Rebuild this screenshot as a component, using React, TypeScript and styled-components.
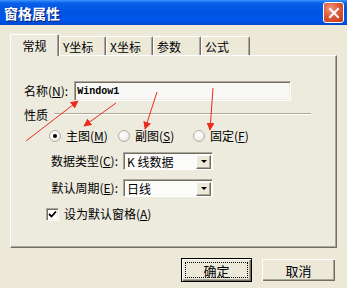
import React from "react";
import styled, { createGlobalStyle } from "styled-components";

const Global = createGlobalStyle`
  html, body { margin: 0; padding: 0; background: #ECE9D8; }
  body { font-family: "Noto Sans CJK SC", "Noto Sans", sans-serif; font-size: 12px; color: #000; }
`;

const Dialog = styled.div`
  position: relative;
  width: 347px;
  height: 288px;
  background: #ECE9D8;
  display: flex;
  flex-direction: column;
  overflow: hidden;
`;

const TitleBar = styled.div`
  height: 25px;
  flex: none;
  display: flex;
  align-items: center;
  justify-content: space-between;
  padding: 0 3px 0 4px;
  background: linear-gradient(to bottom, #3d95ff 0%, #0a5fe8 12%, #0054e3 45%, #0056ec 80%, #0048d0 100%);
`;

const Title = styled.span`
  color: #fff;
  font-weight: 700;
  font-size: 14px;
  letter-spacing: 0px;
  text-shadow: 1px 1px 0 #0a1e6e;
`;

const CloseBtn = styled.div`
  width: 21px;
  height: 21px;
  box-sizing: border-box;
  border: 1px solid #fff;
  border-radius: 3px;
  background: radial-gradient(circle at 35% 30%, #f29a7e 0%, #e0583a 45%, #c13a1c 100%);
  display: flex;
  align-items: center;
  justify-content: center;
`;

const Body = styled.div`
  flex: 1;
  display: flex;
  flex-direction: column;
  padding: 9px 10px 0 10px;
`;

const TabStrip = styled.div`
  display: flex;
  align-items: flex-end;
  height: 21px;
  flex: none;
  position: relative;
  z-index: 1;
`;

const Tab = styled.div<{ $active?: boolean; $w: number }>`
  box-sizing: border-box;
  width: ${(p) => p.$w}px;
  height: ${(p) => (p.$active ? 22 : 19)}px;
  margin-bottom: ${(p) => (p.$active ? -1 : 0)}px;
  background: ${(p) => (p.$active ? "#EDEADE" : "#ECE9D8")};
  border-top: 1px solid #fff;
  border-left: 1px solid #fff;
  border-right: 1px solid #716F64;
  box-shadow: inset -1px 0 0 #ACA899;
  border-radius: 2px 2px 0 0;
  display: flex;
  align-items: center;
  justify-content: ${(p) => (p.$active ? "center" : "flex-start")};
  padding-left: ${(p) => (p.$active ? 0 : 3)}px;
  font-size: 12px;
  line-height: 1;
  padding-top: ${(p) => (p.$active ? 0 : 1)}px;
`;

const Panel = styled.div`
  box-sizing: border-box;
  width: 327px;
  height: 193px;
  flex: none;
  background: #EDEADE;
  border-top: 1px solid #fff;
  border-left: 1px solid #fff;
  border-right: 1px solid #716F64;
  border-bottom: 1px solid #716F64;
  box-shadow: inset -1px -1px 0 #ACA899;
  padding: 25px 0 0 13px;
  display: flex;
  flex-direction: column;
`;

const NameRow = styled.div`
  display: flex;
  align-items: center;
  height: 20px;
  gap: 3px;
`;

const Label = styled.span`
  white-space: nowrap;
  line-height: 1;
`;

const Key = styled.span`
  text-decoration: underline;
`;

const TextInput = styled.div`
  box-sizing: border-box;
  width: 217px;
  height: 20px;
  margin-left: 3px;
  background: #f8f8f6;
  border-top: 1px solid #ACA899;
  border-left: 1px solid #ACA899;
  border-right: 1px solid #fff;
  border-bottom: 1px solid #fff;
  box-shadow: inset 1px 1px 0 #716F64, inset -1px -1px 0 #F1EFE2;
  font-family: "Liberation Mono", "DejaVu Sans Mono", monospace;
  font-size: 10px;
  font-weight: 700;
  display: flex;
  align-items: center;
  padding-left: 2px;
`;

const GroupHead = styled.div`
  display: flex;
  align-items: center;
  height: 14px;
  margin-top: 7px;
  gap: 6px;
`;

const GroupLine = styled.div`
  width: 257px;
  height: 0;
  border-top: 1px solid #ACA899;
  border-bottom: 1px solid #fff;
  margin-top: -3px;
`;

const RadioRow = styled.div`
  display: flex;
  align-items: center;
  height: 14px;
  margin-top: 7px;
  padding-left: 25px;
`;

const RadioItem = styled.label<{ $w: number }>`
  display: flex;
  align-items: center;
  gap: 5px;
  width: ${(p) => p.$w}px;
  white-space: nowrap;
`;

const RadioDot = styled.span<{ $on?: boolean }>`
  box-sizing: border-box;
  width: 12px;
  height: 12px;
  flex: none;
  border-radius: 50%;
  border: 1px solid #b4b0a0;
  background: radial-gradient(circle at 40% 35%, #fff 0%, #f4f3ee 50%, #dcd9cc 100%);
  display: flex;
  align-items: center;
  justify-content: center;
  &::after {
    content: "";
    width: 4px;
    height: 4px;
    border-radius: 50%;
    background: ${(p) => (p.$on ? "#000" : "transparent")};
  }
`;

const FieldGrid = styled.div`
  display: grid;
  grid-template-columns: 77px 90px;
  column-gap: 3px;
  row-gap: 9px;
  margin-top: 9px;
  padding-left: 19px;
  align-items: center;
`;

const FieldLabel = styled.span`
  text-align: right;
  white-space: nowrap;
  line-height: 1;
  padding-right: 2px;
`;

const Select = styled.div`
  box-sizing: border-box;
  height: 18px;
  background: #fbfbf9;
  border-top: 1px solid #ACA899;
  border-left: 1px solid #ACA899;
  border-right: 1px solid #fff;
  border-bottom: 1px solid #fff;
  box-shadow: inset 1px 1px 0 #716F64;
  display: flex;
  align-items: center;
  padding: 1px 1px 0 3px;
`;

const SelectText = styled.span`
  flex: 1;
  line-height: 1;
  white-space: nowrap;
`;

const DropBtn = styled.span`
  box-sizing: border-box;
  width: 15px;
  height: 14px;
  background: #ECE9D8;
  border-top: 1px solid #fff;
  border-left: 1px solid #fff;
  border-right: 1px solid #716F64;
  border-bottom: 1px solid #716F64;
  box-shadow: inset -1px -1px 0 #ACA899;
  display: flex;
  align-items: center;
  justify-content: center;
  &::after {
    content: "";
    border-left: 3px solid transparent;
    border-right: 3px solid transparent;
    border-top: 3px solid #000;
  }
`;

const CheckRow = styled.label`
  display: flex;
  align-items: center;
  gap: 5px;
  margin-top: 10px;
  padding-left: 22px;
  height: 14px;
  white-space: nowrap;
`;

const CheckBox = styled.span`
  box-sizing: border-box;
  width: 13px;
  height: 13px;
  flex: none;
  background: #fff;
  border-top: 1px solid #ACA899;
  border-left: 1px solid #ACA899;
  border-right: 1px solid #fff;
  border-bottom: 1px solid #fff;
  box-shadow: inset 1px 1px 0 #716F64, inset -1px -1px 0 #F1EFE2;
  display: flex;
  align-items: center;
  justify-content: center;
`;

const ButtonRow = styled.div`
  display: flex;
  justify-content: flex-end;
  gap: 9px;
  padding-right: 1px;
  margin-top: 10px;
`;

const Button = styled.div<{ $default?: boolean; $w: number }>`
  box-sizing: border-box;
  width: ${(p) => p.$w}px;
  height: 24px;
  background: #ECE9D8;
  border: 1px solid ${(p) => (p.$default ? "#000" : "transparent")};
  box-shadow: inset 1px 1px 0 #fff, inset -1px -1px 0 #716F64, inset -2px -2px 0 #ACA899;
  display: flex;
  align-items: center;
  justify-content: center;
  position: relative;
  font-size: 13px;
  line-height: 1;
  &::after {
    content: "";
    display: ${(p) => (p.$default ? "block" : "none")};
    position: absolute;
    inset: 3px;
    border: 1px dotted #000;
  }
`;

const Overlay = styled.svg`
  position: absolute;
  left: 0;
  top: 0;
  pointer-events: none;
`;

const tabs = [
  { t: "常规", w: 49, active: true },
  { t: "Y坐标", w: 47 },
  { t: "X坐标", w: 47 },
  { t: "参数", w: 48 },
  { t: "公式", w: 49 },
];

const arrows: [number, number, number, number][] = [
  [26, 141, 78, 101],
  [116, 103, 84, 126],
  [157, 92, 145, 129],
  [213, 88, 210, 130],
];

export default function App() {
  return (
    <>
      <Global />
      <Dialog>
        <TitleBar>
          <Title>窗格属性</Title>
          <CloseBtn>
            <svg width="12" height="12" viewBox="0 0 12 12">
              <path d="M2 2 L10 10 M10 2 L2 10" stroke="#fff" strokeWidth="2" strokeLinecap="square" />
            </svg>
          </CloseBtn>
        </TitleBar>
        <Body>
          <TabStrip>
            {tabs.map((tb) => (
              <Tab key={tb.t} $w={tb.w} $active={tb.active}>
                {tb.t}
              </Tab>
            ))}
          </TabStrip>
          <Panel>
            <NameRow>
              <Label>
                名称(<Key>N</Key>):
              </Label>
              <TextInput>Window1</TextInput>
            </NameRow>
            <GroupHead>
              <Label>性质</Label>
              <GroupLine />
            </GroupHead>
            <RadioRow>
              <RadioItem $w={69}>
                <RadioDot $on />
                <Label>
                  主图(<Key>M</Key>)
                </Label>
              </RadioItem>
              <RadioItem $w={75}>
                <RadioDot />
                <Label>
                  副图(<Key>S</Key>)
                </Label>
              </RadioItem>
              <RadioItem $w={70}>
                <RadioDot />
                <Label>
                  固定(<Key>F</Key>)
                </Label>
              </RadioItem>
            </RadioRow>
            <FieldGrid>
              <FieldLabel>
                数据类型(<Key>C</Key>):
              </FieldLabel>
              <Select>
                <SelectText>K 线数据</SelectText>
                <DropBtn />
              </Select>
              <FieldLabel>
                默认周期(<Key>E</Key>):
              </FieldLabel>
              <Select>
                <SelectText>日线</SelectText>
                <DropBtn />
              </Select>
            </FieldGrid>
            <CheckRow>
              <CheckBox>
                <svg width="9" height="9" viewBox="0 0 9 9">
                  <path d="M1 4 L3.5 6.5 L8 1.5" stroke="#000" strokeWidth="1.8" fill="none" />
                </svg>
              </CheckBox>
              <Label>
                设为默认窗格(<Key>A</Key>)
              </Label>
            </CheckRow>
          </Panel>
          <ButtonRow>
            <Button $default $w={71}>确定</Button>
            <Button $w={75}>取消</Button>
          </ButtonRow>
        </Body>
        <Overlay width="347" height="288">
          <defs>
            <marker id="ah" viewBox="0 0 10 10" refX="9" refY="5" markerWidth="8" markerHeight="8" orient="auto">
              <path d="M0 0 L10 5 L0 10 z" fill="#ee2a1e" />
            </marker>
          </defs>
          {arrows.map(([x1, y1, x2, y2], i) => (
            <line key={i} x1={x1} y1={y1} x2={x2} y2={y2} stroke="#ee2a1e" strokeWidth="1" markerEnd="url(#ah)" />
          ))}
        </Overlay>
      </Dialog>
    </>
  );
}
